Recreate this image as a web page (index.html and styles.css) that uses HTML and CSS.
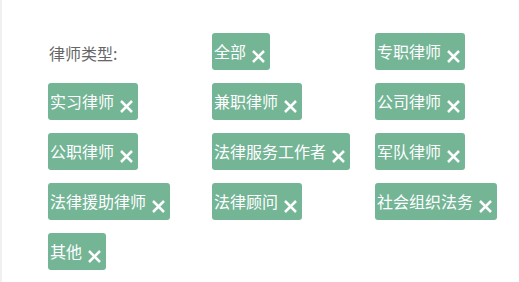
FILE: index.html
```html
<!DOCTYPE html>
<html lang="zh">
<head>
<meta charset="utf-8">
<link rel="stylesheet" href="styles.css">
</head>
<body>
<div class="page">
  <div class="filter">
    <div class="label">律师类型:</div>
    <div class="tag"><span>全部</span><svg class="x" viewBox="0 0 13 13"><path d="M1 1L12 12M12 1L1 12"/></svg></div>
    <div class="tag"><span>专职律师</span><svg class="x" viewBox="0 0 13 13"><path d="M1 1L12 12M12 1L1 12"/></svg></div>
    <div class="tag"><span>实习律师</span><svg class="x" viewBox="0 0 13 13"><path d="M1 1L12 12M12 1L1 12"/></svg></div>
    <div class="tag"><span>兼职律师</span><svg class="x" viewBox="0 0 13 13"><path d="M1 1L12 12M12 1L1 12"/></svg></div>
    <div class="tag"><span>公司律师</span><svg class="x" viewBox="0 0 13 13"><path d="M1 1L12 12M12 1L1 12"/></svg></div>
    <div class="tag"><span>公职律师</span><svg class="x" viewBox="0 0 13 13"><path d="M1 1L12 12M12 1L1 12"/></svg></div>
    <div class="tag"><span>法律服务工作者</span><svg class="x" viewBox="0 0 13 13"><path d="M1 1L12 12M12 1L1 12"/></svg></div>
    <div class="tag"><span>军队律师</span><svg class="x" viewBox="0 0 13 13"><path d="M1 1L12 12M12 1L1 12"/></svg></div>
    <div class="tag"><span>法律援助律师</span><svg class="x" viewBox="0 0 13 13"><path d="M1 1L12 12M12 1L1 12"/></svg></div>
    <div class="tag"><span>法律顾问</span><svg class="x" viewBox="0 0 13 13"><path d="M1 1L12 12M12 1L1 12"/></svg></div>
    <div class="tag"><span>社会组织法务</span><svg class="x" viewBox="0 0 13 13"><path d="M1 1L12 12M12 1L1 12"/></svg></div>
    <div class="tag"><span>其他</span><svg class="x" viewBox="0 0 13 13"><path d="M1 1L12 12M12 1L1 12"/></svg></div>
  </div>
</div>
</body>
</html>
```

FILE: styles.css
```css
html, body {
  margin: 0;
  padding: 0;
  background: #fff;
}
.page {
  width: 519px;
  height: 282px;
  box-sizing: border-box;
  border-left: 2px solid #f0f0f0;
  padding: 33px 0 0 46px;
  font-family: "Noto Sans CJK SC", "Noto Sans", sans-serif;
}
.filter {
  display: grid;
  grid-template-columns: 164px 163px 140px;
  grid-auto-rows: 37px;
  row-gap: 13px;
  align-items: start;
}
.label {
  height: 37px;
  display: flex;
  align-items: center;
  padding-left: 1px;
  font-size: 16px;
  color: #666;
  padding-top: 3px;
  box-sizing: border-box;
}
.tag {
  justify-self: start;
  height: 37px;
  box-sizing: border-box;
  display: flex;
  align-items: center;
  padding: 0 5px 0 2px;
  background: #74b596;
  border-radius: 3px;
  color: #fff;
  font-size: 16px;
  line-height: 1;
}
.tag span {
  display: block;
  padding-bottom: 1px;
}
.x {
  width: 13px;
  height: 13px;
  margin-left: 6px;
  margin-top: 9px;
  fill: none;
  stroke: #fff;
  stroke-width: 2.5;
  stroke-linecap: butt;
}
```
